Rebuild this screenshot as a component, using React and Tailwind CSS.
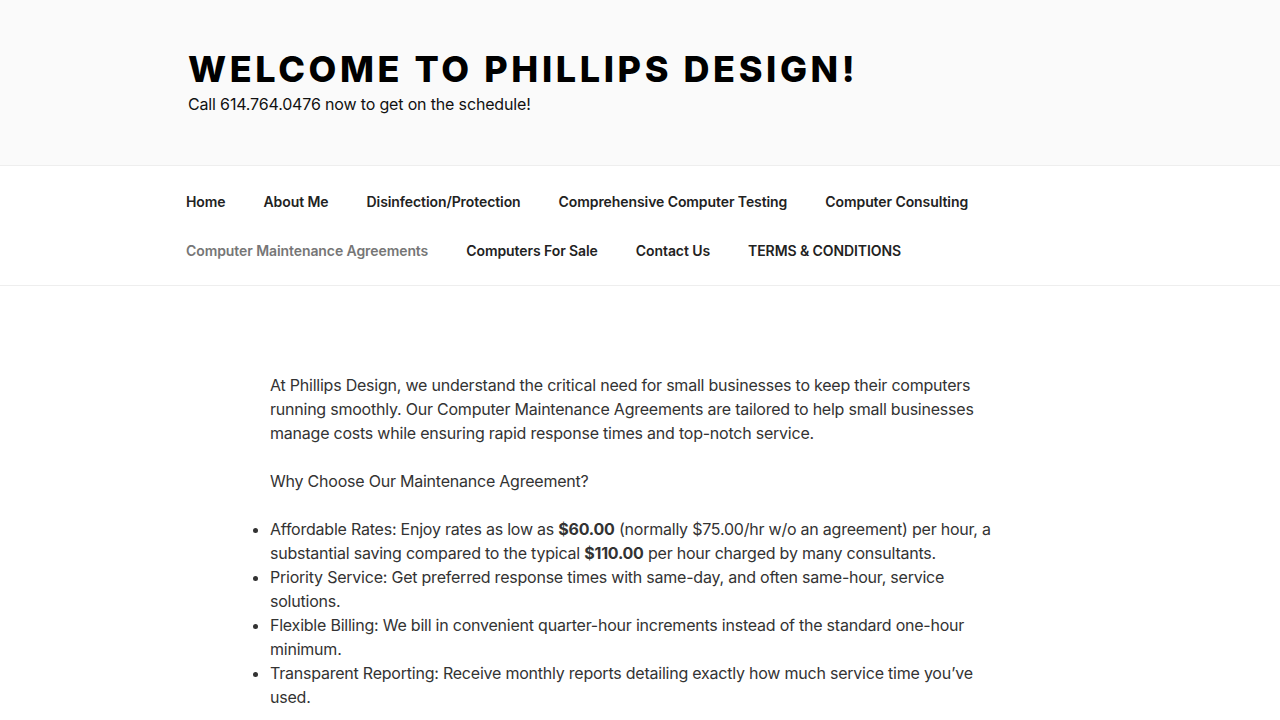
const row1 = ["Home", "About Me", "Disinfection/Protection", "Comprehensive Computer Testing", "Computer Consulting"];
const row2 = ["Computer Maintenance Agreements", "Computers For Sale", "Contact Us", "TERMS & CONDITIONS"];

function NavRow({ items, currentIndex }) {
  return (
    <ul className="flex h-[49px] items-center gap-[38px]">
      {items.map((it, i) => (
        <li key={it}>
          <a
            href="#"
            className={
              "text-[14px] font-semibold tracking-[-0.006em] whitespace-nowrap " +
              (i === currentIndex ? "text-[#767676]" : "text-[#222222]")
            }
          >
            {it}
          </a>
        </li>
      ))}
    </ul>
  );
}

export default function App() {
  return (
    <div className="min-h-screen bg-white text-[#333333]" style={{ fontFamily: "Inter, 'Noto Sans', sans-serif" }}>
      <header className="h-[166px] border-b border-[#eeeeee] bg-[#fafafa]">
        <div className="mx-auto w-[1000px] px-[48px] pt-[47px]">
          <h1 className="text-[36px] font-extrabold uppercase leading-[45px] tracking-[0.1em] text-[#000000] whitespace-nowrap">
            Welcome to Phillips Design!
          </h1>
          <p className="text-[16px] leading-6 tracking-[-0.01em] text-[#111111]">
            Call 614.764.0476 now to get on the schedule!
          </p>
        </div>
      </header>

      <nav className="border-b border-[#eeeeee] bg-white">
        <div className="mx-auto w-[1000px] px-[46px] py-[10.5px]">
          <NavRow items={row1} currentIndex={-1} />
          <NavRow items={row2} currentIndex={0} />
        </div>
      </nav>

      <main className="mx-auto w-[1000px] px-[48px] pt-[87px] pb-16">
        <div className="ml-[82px] w-[728px] text-[16px] leading-6 tracking-[-0.014em] text-[#333333]">
          <p>
            At Phillips Design, we understand the critical need for small businesses to keep their computers running
            smoothly. Our Computer Maintenance Agreements are tailored to help small businesses manage costs while
            ensuring rapid response times and top-notch service.
          </p>
          <p className="mt-6">Why Choose Our Maintenance Agreement?</p>
          <ul className="mt-6 list-disc list-outside">
            <li>
              Affordable Rates: Enjoy rates as low as <strong className="font-bold">$60.00</strong> (normally
              $75.00/hr w/o an agreement) per hour, a substantial saving compared to the typical{" "}
              <strong className="font-bold">$110.00</strong> per hour charged by many consultants.
            </li>
            <li>
              Priority Service: Get preferred response times with same-day, and often same-hour, service solutions.
            </li>
            <li>
              Flexible Billing: We bill in convenient quarter-hour increments instead of the standard one-hour minimum.
            </li>
            <li>Transparent Reporting: Receive monthly reports detailing exactly how much service time you’ve used.</li>
          </ul>
        </div>
      </main>
    </div>
  );
}
